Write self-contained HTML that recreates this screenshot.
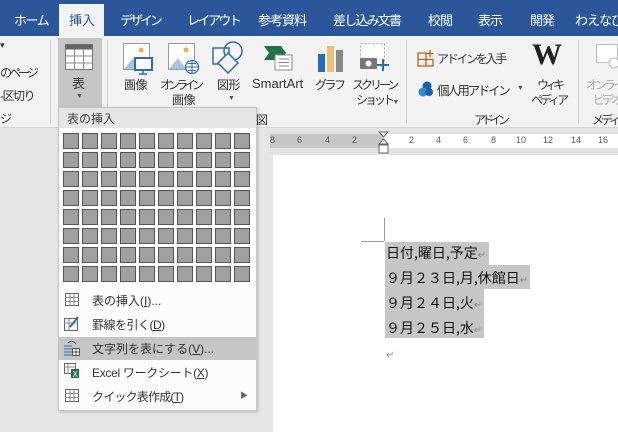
<!DOCTYPE html>
<html><head><meta charset="utf-8">
<style>
*{margin:0;padding:0;box-sizing:border-box}
body{width:618px;height:432px;overflow:hidden;position:relative;background:#e6e6e6;font-family:"Liberation Sans","Noto Sans CJK JP",sans-serif;color:#333}
.a{position:absolute;white-space:nowrap}
.tab{color:#fff;font-size:13px;top:10px}
.lbl{font-size:12px;color:#333}
.sep{position:absolute;width:1px;background:#d4d4d4}
.cell{position:absolute;width:16px;height:16px;background:#a0a0a0;border:1px solid #555}
.mi{font-size:12px;color:#333}
u{text-decoration:underline}
</style></head><body>
<!-- tab bar -->
<div class="a" style="left:0;top:0;width:618px;height:36px;background:#2b579a"></div>
<div class="a" style="left:59px;top:4px;width:45px;height:32px;background:#f3f3f3"></div>
<div class="a tab" style="left:14px;letter-spacing:-1.5px">ホーム</div>
<div class="a tab" style="left:69px;color:#2b579a">挿入</div>
<div class="a tab" style="left:120px;letter-spacing:-3px">デザイン</div>
<div class="a tab" style="left:187px;letter-spacing:-2.5px">レイアウト</div>
<div class="a tab" style="left:258px;letter-spacing:-1px">参考資料</div>
<div class="a tab" style="left:333px;letter-spacing:-1.8px">差し込み文書</div>
<div class="a tab" style="left:428px;letter-spacing:-1px">校閲</div>
<div class="a tab" style="left:478px;letter-spacing:-1px">表示</div>
<div class="a tab" style="left:530px;letter-spacing:-1px">開発</div>
<div class="a tab" style="left:575px;letter-spacing:-1px">わえなび</div>
<!-- ribbon -->
<div class="a" style="left:0;top:36px;width:618px;height:92px;background:#f3f3f3;border-bottom:1px solid #d6d6d6"></div>
<div class="a lbl" style="left:0;top:40px;font-size:9px">▾</div>
<div class="a lbl" style="left:0;top:64px;letter-spacing:-3px">のページ</div>
<div class="a lbl" style="left:0;top:87px;letter-spacing:-1.5px">-区切り</div>
<div class="a lbl" style="left:0;top:110px">ジ</div>
<div class="sep" style="left:50px;top:40px;height:84px"></div>
<div class="a" style="left:58px;top:38px;width:44px;height:70px;background:#c6c6c6"></div>
<svg class="a" style="left:65px;top:44px" width="28" height="26"><rect x="0.5" y="0.5" width="27" height="25" fill="#fff" stroke="#777"/><rect x="0.5" y="0.5" width="27" height="5" fill="#666"/><path d="M0 12H28M0 19H28M9.5 5V26M18.5 5V26" stroke="#888"/></svg>
<div class="a lbl" style="left:72px;top:73px;font-size:13px">表</div>
<div class="a" style="left:76px;top:93px;font-size:7px;color:#555">▼</div>
<div class="sep" style="left:107px;top:40px;height:84px"></div>
<!-- 画像 -->
<svg class="a" style="left:123px;top:43px" width="30" height="32"><rect x="0.5" y="0.5" width="26" height="26" fill="#fff" stroke="#999"/><circle cx="18" cy="7" r="2.5" fill="#e8b44a"/><path d="M1 26L10 15L18 26Z" fill="#a8c4dc"/><rect x="12" y="15" width="17" height="12" fill="#fff" stroke="#2b6cb0" stroke-width="2"/><path d="M20 27V31M16 31H24" stroke="#2b6cb0" stroke-width="1.5"/></svg>
<div class="a lbl" style="left:124px;top:76px;letter-spacing:-0.5px">画像</div>
<svg class="a" style="left:168px;top:43px" width="32" height="32"><rect x="0.5" y="0.5" width="26" height="26" fill="#fff" stroke="#999"/><circle cx="18" cy="7" r="2.5" fill="#e8b44a"/><path d="M1 26L10 15L18 26Z" fill="#a8c4dc"/><circle cx="24" cy="24" r="6.5" fill="#fff" stroke="#2b6cb0" stroke-width="1.3"/><path d="M17.5 24H30.5M24 17.5V30.5M20 20.5H28M20 27.5H28" stroke="#2b6cb0" stroke-width="1"/></svg>
<div class="a lbl" style="left:160px;top:76px;letter-spacing:-4px">オンライン</div>
<div class="a lbl" style="left:172px;top:91px;letter-spacing:-0.5px">画像</div>
<svg class="a" style="left:212px;top:40px" width="32" height="34"><rect x="1" y="8" width="16" height="16" fill="#fff" stroke="#2b6cb0" stroke-width="1.5"/><circle cx="21" cy="11" r="9" fill="none" stroke="#2b6cb0" stroke-width="1.5"/><path d="M16 13L26 23L16 33L6 23Z" fill="#f3f3f3" stroke="#2b6cb0" stroke-width="1.5"/></svg>
<div class="a lbl" style="left:217px;top:76px;letter-spacing:-0.5px">図形</div>
<div class="a" style="left:228px;top:95px;font-size:7px;color:#555">▼</div>
<svg class="a" style="left:264px;top:46px" width="30" height="26"><path d="M0 0H17L22 7L17 14H0L5 7Z" fill="#217346"/><rect x="11" y="9" width="17" height="15" fill="#fff" stroke="#888"/><path d="M15 13H25M15 16.5H25M15 20H25" stroke="#888"/></svg>
<div class="a lbl" style="left:252px;top:76px;font-size:13px">SmartArt</div>
<svg class="a" style="left:318px;top:44px" width="26" height="28"><rect x="0" y="10" width="7" height="18" fill="#2b6cb0"/><rect x="9" y="2" width="7" height="26" fill="#f0c070"/><rect x="18" y="6" width="7" height="22" fill="#888"/></svg>
<div class="a lbl" style="left:315px;top:76px;letter-spacing:-2.5px">グラフ</div>
<svg class="a" style="left:360px;top:43px" width="30" height="30"><rect x="0.5" y="0.5" width="24" height="22" fill="#fff" stroke="#aaa" stroke-dasharray="2 2"/><rect x="0" y="15" width="17" height="11" rx="1" fill="#777"/><circle cx="8.5" cy="20.5" r="3" fill="#fff"/><path d="M23 16V28M17 22H29" stroke="#2b6cb0" stroke-width="2"/></svg>
<div class="a lbl" style="left:352px;top:76px;letter-spacing:-3px">スクリーン</div>
<div class="a lbl" style="left:356px;top:91px;letter-spacing:-3px">ショット <span style="font-size:7px;color:#555;letter-spacing:0">▼</span></div>
<div class="sep" style="left:406px;top:40px;height:84px"></div>
<svg class="a" style="left:417px;top:49px" width="18" height="18"><path d="M1 4H9V17H1ZM1 10.5H16M9 10.5V17H16V10.5M13 1V8M9.5 4.5H16.5" fill="none" stroke="#c55a11" stroke-width="1.3"/></svg>
<div class="a lbl" style="left:437px;top:50px;letter-spacing:-2.3px">アドインを入手</div>
<svg class="a" style="left:418px;top:81px" width="16" height="16"><circle cx="9" cy="5" r="4.5" fill="#1e5fa8"/><circle cx="5" cy="11" r="4.5" fill="#2b8fd6"/><circle cx="11" cy="11" r="4" fill="#1e5fa8"/></svg>
<div class="a lbl" style="left:437px;top:80px;font-size:12.5px;letter-spacing:-2.3px">個人用アドイン</div>
<div class="a" style="left:517px;top:85px;font-size:7px;color:#555">▼</div>
<div class="a" style="left:532px;top:38px;font-family:'Liberation Serif',serif;font-size:30px;font-weight:bold;color:#222">W</div>
<div class="a lbl" style="left:537px;top:76px;letter-spacing:-4px">ウィキ</div>
<div class="a lbl" style="left:531px;top:91px;letter-spacing:-3px">ペディア</div>
<div class="a lbl" style="left:474px;top:111px;letter-spacing:-4px">アドイン</div>
<div class="sep" style="left:578px;top:40px;height:84px"></div>
<svg class="a" style="left:596px;top:44px" width="22" height="26"><rect x="0.5" y="0.5" width="21" height="18" fill="#fff" stroke="#bbb"/><circle cx="18" cy="19" r="5" fill="#fff" stroke="#bbb"/></svg>
<div class="a lbl" style="left:586px;top:76px;color:#aaa;letter-spacing:-3px">オンライ</div>
<div class="a lbl" style="left:593px;top:91px;color:#aaa;letter-spacing:-3px">ビデオ</div>
<div class="a lbl" style="left:592px;top:111px;letter-spacing:-3px">メディア</div>
<div class="a lbl" style="left:256px;top:111px">図</div>
<!-- ruler -->
<div class="a" style="left:268px;top:132px;width:350px;height:22px;background:#e3e3e3"></div>
<div class="a" style="left:270px;top:134px;width:113px;height:14px;background:#c6c6c6"></div>
<div class="a" style="left:383px;top:134px;width:235px;height:14px;background:#fff"></div>
<div class="a" style="left:270px;top:135px;font-size:9px;color:#555;word-spacing:0">
<span class="a" style="left:0">8</span><span class="a" style="left:27px">6</span><span class="a" style="left:55px">4</span><span class="a" style="left:82px">2</span>
<span class="a" style="left:139px">2</span><span class="a" style="left:166px">4</span><span class="a" style="left:193px">6</span><span class="a" style="left:221px">8</span><span class="a" style="left:246px">10</span><span class="a" style="left:273px">12</span><span class="a" style="left:301px">14</span><span class="a" style="left:328px">16</span></div>
<svg class="a" style="left:378px;top:131px" width="12" height="24"><path d="M1 1H10L5.5 6Z" fill="#fff" stroke="#666"/><path d="M5.5 8L10 13H1Z" fill="#fff" stroke="#666"/><rect x="1" y="14" width="9" height="8" fill="#fff" stroke="#666"/></svg>
<!-- page -->
<div class="a" style="left:273px;top:155px;width:345px;height:277px;background:#fff"></div>
<div class="a" style="left:384px;top:218px;width:1px;height:23px;background:#999"></div>
<div class="a" style="left:361px;top:241px;width:23px;height:1px;background:#999"></div>
<div class="a" style="left:385px;top:242px;width:104px;height:23px;background:#c6c6c6"></div>
<div class="a" style="left:385px;top:265px;width:145px;height:24px;background:#c6c6c6"></div>
<div class="a" style="left:385px;top:289px;width:99px;height:25px;background:#c6c6c6"></div>
<div class="a" style="left:385px;top:314px;width:99px;height:24px;background:#c6c6c6"></div>
<div class="a" style="left:386px;top:241px;font-size:14px;color:#111;line-height:24px;font-family:'Noto Sans CJK JP',sans-serif">日付,曜日,予定<span style="color:#888;font-size:10px">↵</span><br>９月２３日,月,休館日<span style="color:#888;font-size:10px">↵</span><br>９月２４日,火<span style="color:#888;font-size:10px">↵</span><br>９月２５日,水<span style="color:#888;font-size:10px">↵</span><br><span style="color:#888;font-size:10px">↵</span></div>
<!-- dropdown menu -->
<div class="a" style="left:58px;top:107px;width:199px;height:304px;background:#fcfcfc;border:1px solid #c6c6c6;box-shadow:1px 1px 3px rgba(0,0,0,.2)"></div>
<div class="a" style="left:59px;top:108px;width:197px;height:20px;background:#e5e5e5"></div>
<div class="a" style="left:67px;top:110px;font-size:12px;color:#444">表の挿入</div>
<div id="grid"></div>
<div class="a" style="left:59px;top:337px;width:197px;height:23px;background:#c6c6c6"></div>
<svg class="a" style="left:65px;top:293px" width="14" height="14"><rect x=".5" y=".5" width="13" height="12" fill="#fff" stroke="#666"/><path d="M0 4.5H14M0 8.5H14M5 1V13M9 1V13" stroke="#888"/></svg>
<div class="a mi" style="left:92px;top:292px">表の挿入(<u>I</u>)...</div>
<svg class="a" style="left:64px;top:315px" width="16" height="16"><rect x=".5" y="3.5" width="13" height="12" fill="#fff" stroke="#666"/><path d="M0 8H14M5 4V16" stroke="#888"/><path d="M6 12L14 2" stroke="#2b6cb0" stroke-width="2"/></svg>
<div class="a mi" style="left:92px;top:316px;letter-spacing:-0.5px">罫線を引く(<u>D</u>)</div>
<svg class="a" style="left:64px;top:339px" width="16" height="18"><path d="M0 7H8M0 10H8M0 13H8M0 16H8" stroke="#2b6cb0"/><path d="M4 4Q8 0 12 5" fill="none" stroke="#2b6cb0"/><rect x="8.5" y="9.5" width="7" height="7" fill="#fff" stroke="#555"/><path d="M8 13H16M12 9V17" stroke="#555"/></svg>
<div class="a mi" style="left:92px;top:340px">文字列を表にする(<u>V</u>)...</div>
<svg class="a" style="left:64px;top:363px" width="16" height="16"><rect x=".5" y=".5" width="11" height="10" fill="#fff" stroke="#666"/><path d="M0 4H12M4 1V11" stroke="#888"/><rect x="7" y="6" width="8" height="9" fill="#217346"/><text x="8.5" y="14" font-size="8" fill="#fff" font-family="Liberation Sans">X</text></svg>
<div class="a mi" style="left:92px;top:364px;letter-spacing:-0.3px">Excel ワークシート(<u>X</u>)</div>
<svg class="a" style="left:65px;top:389px" width="14" height="14"><rect x=".5" y=".5" width="13" height="12" fill="#fff" stroke="#666"/><path d="M0 4.5H14M0 8.5H14M5 1V13M9 1V13" stroke="#888"/></svg>
<div class="a mi" style="left:92px;top:388px;letter-spacing:-0.8px">クイック表作成(<u>T</u>)</div>
<div class="a" style="left:240px;top:390px;font-size:8px;color:#666">▶</div>
<script>
var g=document.getElementById('grid'),h='';
for(var r=0;r<8;r++)for(var c=0;c<10;c++)h+='<div class="cell" style="left:'+(63+c*19)+'px;top:'+(133+r*19)+'px"></div>';
g.innerHTML=h;
</script>
</body></html>
